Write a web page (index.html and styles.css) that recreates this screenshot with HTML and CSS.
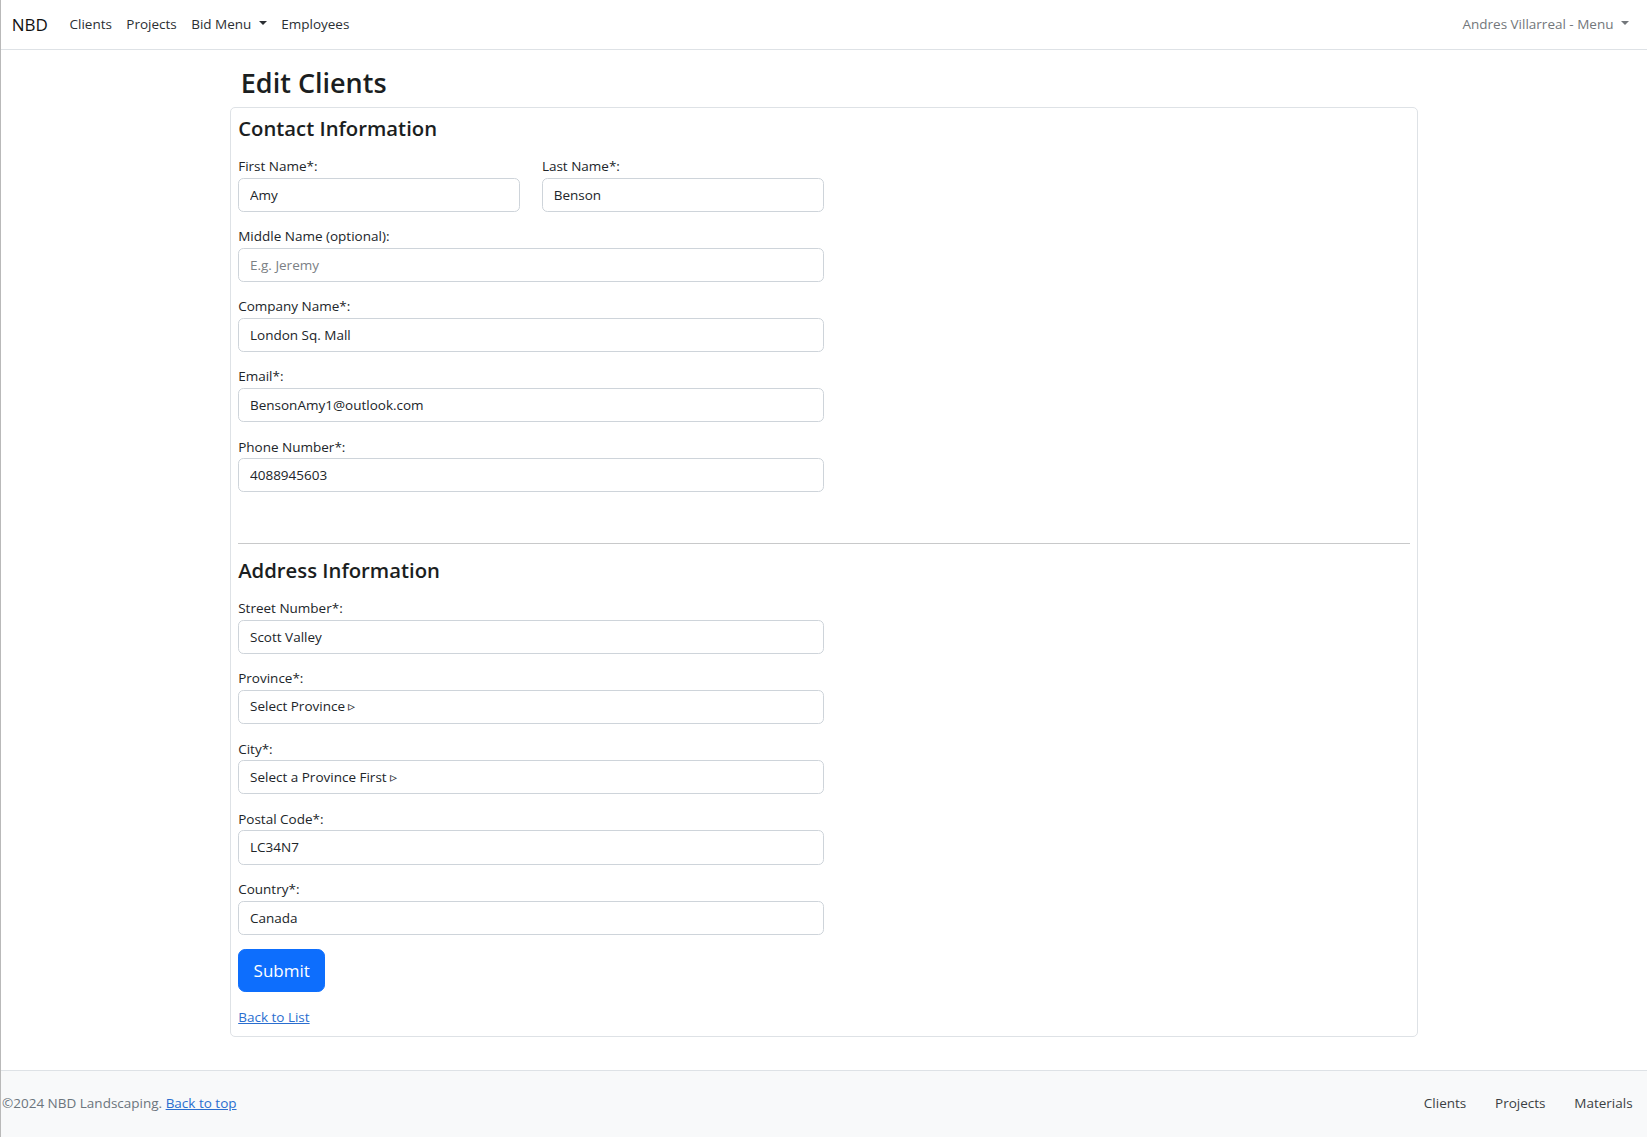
FILE: index.html
```html
<!DOCTYPE html>
<html lang="en">
<head>
<meta charset="utf-8">
<title>Edit Clients - NBD</title>
<link rel="stylesheet" href="styles.css">
</head>
<body>
<header class="navbar">
  <div class="nav-left">
    <a class="brand" href="#">NBD</a>
    <ul class="nav">
      <li><a class="nav-link" href="#">Clients</a></li>
      <li><a class="nav-link" href="#">Projects</a></li>
      <li><a class="nav-link caret" href="#">Bid Menu</a></li>
      <li><a class="nav-link" href="#">Employees</a></li>
    </ul>
  </div>
  <div class="nav-right">
    <a class="nav-link user caret" href="#">Andres Villarreal - Menu</a>
  </div>
</header>

<main class="page">
  <h1 class="page-title">Edit Clients</h1>
  <form class="card">
    <h4 class="section-title">Contact Information</h4>
    <div class="col-half">
      <div class="pair">
        <div class="group">
          <label class="label">First Name*:</label>
          <input class="control" type="text" value="Amy">
        </div>
        <div class="group">
          <label class="label">Last Name*:</label>
          <input class="control" type="text" value="Benson">
        </div>
      </div>
      <div class="group">
        <label class="label">Middle Name (optional):</label>
        <input class="control" type="text" placeholder="E.g. Jeremy">
      </div>
      <div class="group">
        <label class="label">Company Name*:</label>
        <input class="control" type="text" value="London Sq. Mall">
      </div>
      <div class="group">
        <label class="label">Email*:</label>
        <input class="control" type="text" value="BensonAmy1@outlook.com">
      </div>
      <div class="group">
        <label class="label">Phone Number*:</label>
        <input class="control" type="text" value="4088945603">
      </div>
    </div>

    <hr class="divider">

    <h4 class="section-title">Address Information</h4>
    <div class="col-half">
      <div class="group">
        <label class="label">Street Number*:</label>
        <input class="control" type="text" value="Scott Valley">
      </div>
      <div class="group">
        <label class="label">Province*:</label>
        <select class="control"><option>Select Province &#x25B9;</option></select>
      </div>
      <div class="group">
        <label class="label">City*:</label>
        <select class="control"><option>Select a Province First &#x25B9;</option></select>
      </div>
      <div class="group">
        <label class="label">Postal Code*:</label>
        <input class="control" type="text" value="LC34N7">
      </div>
      <div class="group">
        <label class="label">Country*:</label>
        <input class="control" type="text" value="Canada">
      </div>
      <button class="btn-submit" type="button">Submit</button>
      <div class="back">
        <a class="link" href="#">Back to List</a>
      </div>
    </div>
  </form>
</main>

<footer class="footer">
  <p class="footer-text">&copy;2024 NBD Landscaping. <a class="link" href="#">Back to top</a></p>
  <ul class="footer-nav">
    <li><a class="footer-link" href="#">Clients</a></li>
    <li><a class="footer-link" href="#">Projects</a></li>
    <li><a class="footer-link" href="#">Materials</a></li>
  </ul>
</footer>
</body>
</html>
```

FILE: styles.css
```css
* { box-sizing: border-box; }

html, body { margin: 0; padding: 0; }

body {
  font-family: "Open Sans", "Noto Sans", sans-serif;
  font-size: 13.5px;
  line-height: 21.6px;
  color: #212529;
  background: #fff;
  border-left: 1px solid #b9b9b9;
  min-height: 1137px;
}

a { text-decoration: none; color: inherit; }
ul { list-style: none; margin: 0; padding: 0; }

/* ---------- navbar ---------- */
.navbar {
  height: 50px;
  border-bottom: 1px solid #dee2e6;
  display: flex;
  align-items: center;
  justify-content: space-between;
  padding: 0 10.8px;
}
.nav-left { display: flex; align-items: center; }
.brand {
  font-size: 17px;
  line-height: 27px;
  color: #111;
  margin-right: 14.4px;
}
.nav { display: flex; align-items: center; }
.nav-link {
  display: block;
  padding: 7.2px;
  color: #2b2f33;
}
.nav-link.user { color: #73777b; }
.caret::after {
  content: "";
  display: inline-block;
  margin-left: 7.5px;
  vertical-align: 3.5px;
  border-top: 4.5px solid currentColor;
  border-left: 4.6px solid transparent;
  border-right: 4.6px solid transparent;
}

/* ---------- page ---------- */
.page {
  width: 1188px;
  margin: 15.7px auto 0;
}
.page-title {
  margin: 0 0 7.2px;
  padding: 0 10.8px;
  font-size: 27px;
  line-height: 34.56px;
  font-weight: 600;
  color: #1b1e21;
}
.card {
  border: 1px solid #dee2e6;
  border-radius: 5px;
  padding: 7.2px;
}
.section-title {
  margin: 0 0 14.4px;
  font-size: 20.3px;
  line-height: 25.92px;
  font-weight: 600;
  color: #1b1e21;
}
.col-half { width: 585.8px; }
.pair {
  display: grid;
  grid-template-columns: 1fr 1fr;
  column-gap: 21.6px;
}
.group { margin-bottom: 14.4px; }
.label {
  display: block;
  line-height: 21.6px;
}
.control {
  display: block;
  width: 100%;
  height: 34.2px;
  padding: 5.4px 10.8px;
  font-family: inherit;
  font-size: 13.5px;
  line-height: 21.6px;
  color: #212529;
  background: #fff;
  border: 1px solid #ced4da;
  border-radius: 5.4px;
  -webkit-appearance: none;
  appearance: none;
  margin: 0;
}
.control::placeholder { color: #7b8085; }

.divider {
  border: 0;
  border-top: 1px solid #c8c9ca;
  margin: 50.5px 0 14px;
}

.btn-submit {
  display: block;
  font-family: inherit;
  font-size: 17px;
  line-height: 27px;
  padding: 7.2px 14.4px;
  color: #fff;
  background: #0d6efd;
  border: 1px solid #0d6efd;
  border-radius: 7.2px;
}
.back { margin-top: 14.4px; }
.link { color: #2a6ecf; text-decoration: underline; }

/* ---------- footer ---------- */
.footer {
  margin-top: 33px;
  border-top: 1px solid #dee2e6;
  background: #f8f9fa;
  padding: 22.5px 0 22px 1px;
  display: flex;
  justify-content: space-between;
  align-items: center;
}
.footer-text {
  margin: 0;
  color: #6c757d;
}
.footer-nav { display: flex; }
.footer-link {
  display: block;
  padding: 0 14.4px;
  color: #3b3f43;
}
```
